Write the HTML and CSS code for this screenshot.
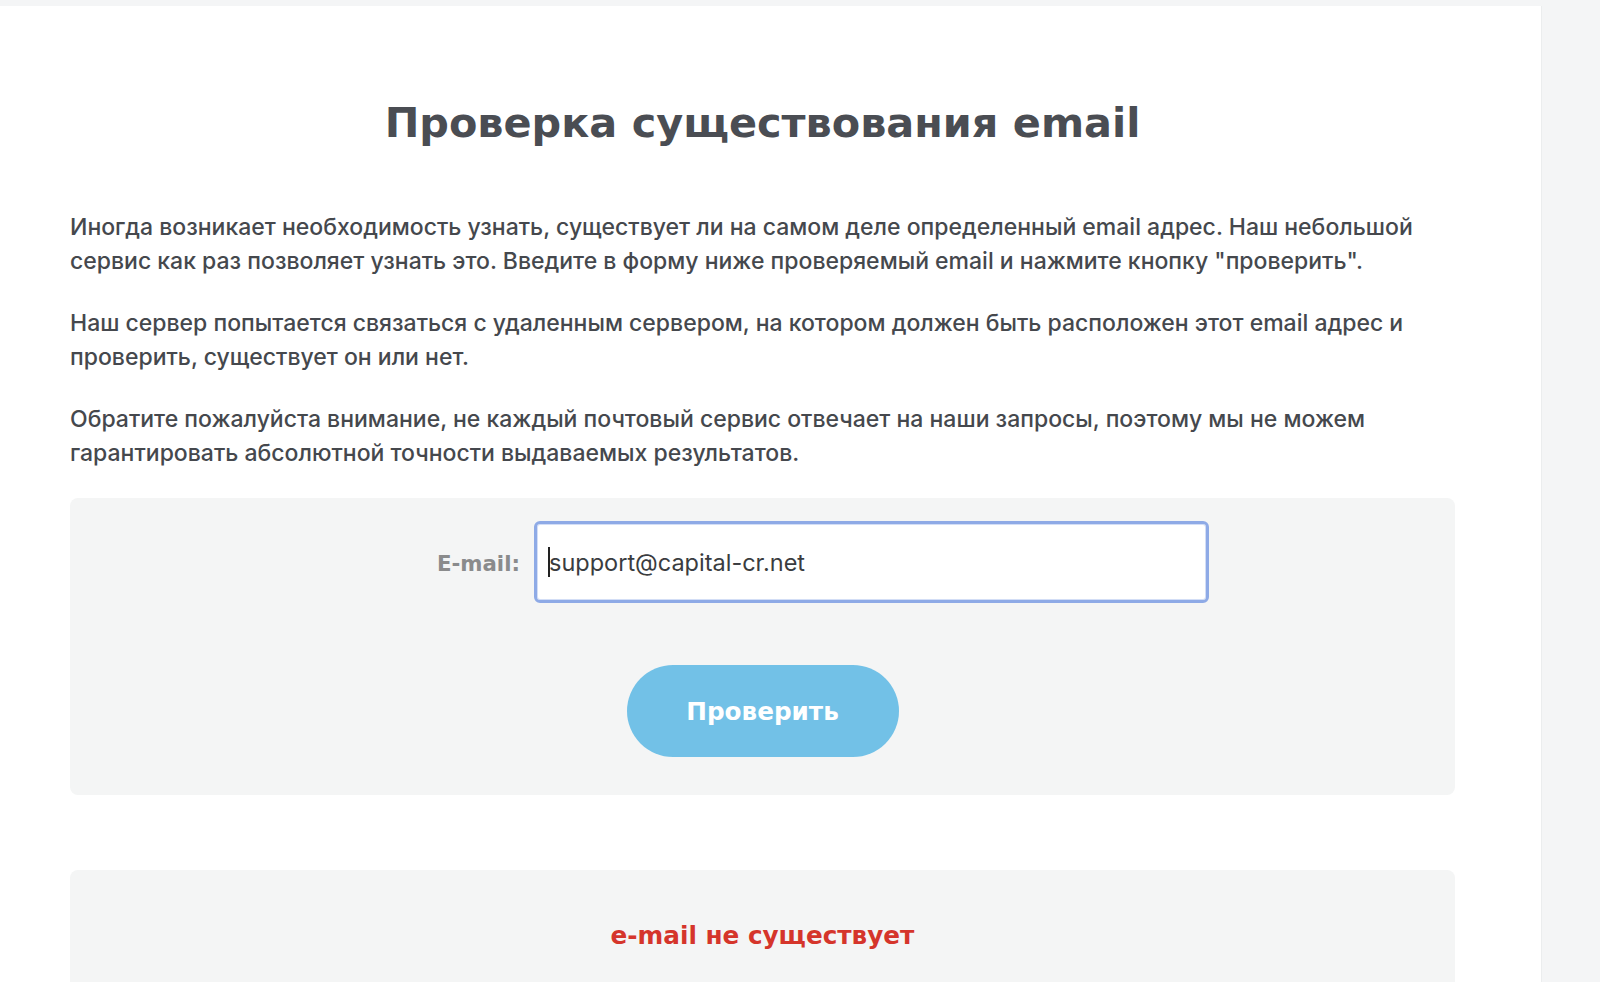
FILE: index.html
```html
<!DOCTYPE html>
<html lang="ru">
<head>
<meta charset="utf-8">
<title>Проверка существования email</title>
<link rel="stylesheet" href="styles.css">
</head>
<body>
<main class="card">
  <h1 class="title">Проверка существования email</h1>
  <p class="text">Иногда возникает необходимость узнать, существует ли на самом деле определенный email адрес. Наш небольшой сервис как раз позволяет узнать это. Введите в форму ниже проверяемый email и нажмите кнопку "проверить".</p>
  <p class="text">Наш сервер попытается связаться с удаленным сервером, на котором должен быть расположен этот email адрес и проверить, существует он или нет.</p>
  <p class="text">Обратите пожалуйста внимание, не каждый почтовый сервис отвечает на наши запросы, поэтому мы не можем гарантировать абсолютной точности выдаваемых результатов.</p>

  <form class="panel form">
    <div class="row">
      <label class="label">E-mail:</label>
      <div class="input"><span class="caret"></span>support@capital-cr.net</div>
    </div>
    <div class="actions">
      <button type="button" class="btn">Проверить</button>
    </div>
  </form>

  <section class="panel result">
    <div class="result-text">e-mail не существует</div>
  </section>
</main>
</body>
</html>
```
FILE: styles.css
```css
html, body {
  margin: 0;
  padding: 0;
  height: 982px;
  overflow: hidden;
}
body {
  background: #f4f5f6;
  font-family: "Inter", "Noto Sans", sans-serif;
}
.card {
  box-sizing: border-box;
  width: 1542px;
  height: 976px;
  margin-top: 6px;
  padding: 92px 86px 0 70px;
  background: #ffffff;
  border-right: 1px solid #ebedee;
}
.title {
  margin: 0;
  font-family: "DejaVu Sans", sans-serif;
  font-weight: 700;
  font-size: 41.4px;
  line-height: 50px;
  color: #4a4d53;
  text-align: center;
}
.text {
  margin: 0 0 28px;
  font-size: 23px;
  font-weight: 500;
  line-height: 34px;
  color: #45484d;
}
.title + .text {
  margin-top: 62px;
}
.panel {
  background: #f4f5f5;
  border-radius: 8px;
}
.form {
  margin: 0;
  padding: 23px 0 38px;
}
.row {
  display: flex;
  align-items: center;
}
.label {
  box-sizing: border-box;
  width: 464px;
  padding: 2px 14px 0 0;
  text-align: right;
  font-family: "DejaVu Sans", sans-serif;
  font-weight: 700;
  font-size: 21.3px;
  color: #8a8b8c;
}
.input {
  box-sizing: border-box;
  width: 675px;
  height: 82px;
  display: flex;
  align-items: center;
  padding: 0 11px;
  background: #ffffff;
  border: 3px solid #8eaae6;
  border-radius: 6px;
  box-shadow: inset 0 0 0 1px #d3def6;
  font-size: 23.5px;
  font-weight: 400;
  color: #3a3c40;
}
.caret {
  display: inline-block;
  width: 2px;
  height: 30px;
  margin-right: -1px;
  background: #222;
}
.actions {
  display: flex;
  justify-content: center;
  margin-top: 62px;
}
.btn {
  width: 272px;
  height: 92px;
  border: 0;
  border-radius: 46px;
  background: #72c1e7;
  color: #ffffff;
  font-family: "DejaVu Sans", sans-serif;
  font-weight: 700;
  font-size: 24.7px;
  cursor: pointer;
}
.result {
  margin-top: 75px;
  padding: 51px 0 47px;
}
.result-text {
  text-align: center;
  font-family: "DejaVu Sans", sans-serif;
  font-weight: 700;
  font-size: 24.7px;
  line-height: 30px;
  color: #d5352b;
}
```
